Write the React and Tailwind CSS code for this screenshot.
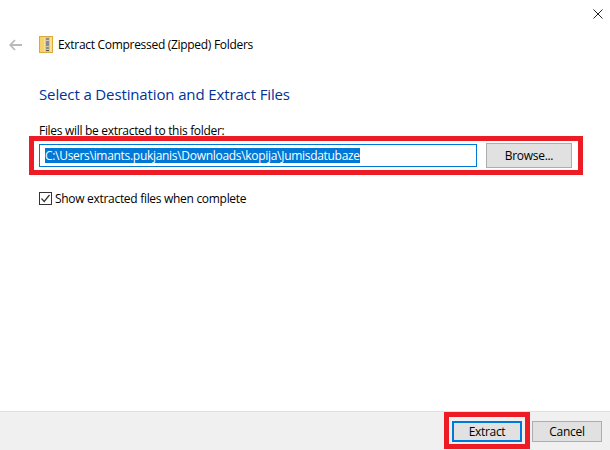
import React from "react";

const font = "font-['Open_Sans','Noto_Sans',sans-serif]";

function ZipFolder() {
  return (
    <svg width="14" height="17" viewBox="0 0 14 17">
      <rect x="0.5" y="0.5" width="13" height="16" fill="#fbe08f" stroke="#d9a93c" />
      <rect x="1" y="1" width="4" height="15" fill="#f7d26c" />
      <rect x="6" y="1" width="5" height="15" fill="#c9c9c4" />
      <path d="M7 3h3M7 6h3M7 9h3M7 12h3M7 14.5h3" stroke="#55554f" strokeWidth="1" />
      <rect x="7" y="6" width="3" height="3" fill="#8b8b85" />
    </svg>
  );
}

export default function App() {
  return (
    <div className={`w-[610px] h-[450px] bg-white flex flex-col overflow-hidden text-[12px] tracking-[-0.3px] text-black ${font}`}>
      <div className="flex justify-end pt-[9px] pr-[7px] h-[36px]">
        <svg width="10" height="10" viewBox="0 0 10 10">
          <path d="M0.5 0.5l9 9M9.5 0.5l-9 9" stroke="#222" strokeWidth="1" />
        </svg>
      </div>
      <div className="flex items-center h-[17px]">
        <svg className="ml-[9px]" width="13" height="12" viewBox="0 0 13 12" fill="none">
          <path d="M6 1L1.2 6L6 11M1.2 6H13" stroke="#b9b9b9" strokeWidth="1.8" />
        </svg>
        <div className="ml-[17px] flex">
          <ZipFolder />
        </div>
        <span className="ml-[5px]">Extract Compressed (Zipped) Folders</span>
      </div>
      <h1 className="ml-[39px] mt-[29px] h-[24px] leading-[24px] text-[15px] tracking-[-0.13px] font-normal text-[#003399]">
        Select a Destination and Extract Files
      </h1>
      <div className="ml-[39px] mt-[17px] h-[16px] leading-[16px]">Files will be extracted to this folder:</div>
      <div className="ml-[29px] mt-[-3px] w-[554px] h-[39px] border-[5px] border-[#ed1c24] pl-[5px] pr-[6px] flex items-center justify-between relative">
        <div className="w-[438px] h-[23px] border border-[#0078d7] flex items-center pl-[5px]">
          <span className="bg-[#0078d7] text-white leading-[15px] whitespace-nowrap">
            C:\Users\imants.pukjanis\Downloads\kopija\Jumisdatubaze
          </span>
        </div>
        <button className="w-[86px] h-[25px] bg-[#e1e1e1] border border-[#adadad]">Browse...</button>
      </div>
      <label className="ml-[39px] mt-[17px] flex items-center h-[13px]">
        <span className="w-[13px] h-[13px] border border-[#333] flex items-center justify-center">
          <svg width="11" height="11" viewBox="0 0 11 11" fill="none">
            <path d="M1.5 5.5L4.2 8.5L9.5 2" stroke="#333" strokeWidth="1.2" />
          </svg>
        </span>
        <span className="ml-[3px]">Show extracted files when complete</span>
      </label>
      <div className="mt-auto h-[39px] bg-[#f0f0f0] border-t border-[#dfdfdf] flex justify-end items-start gap-[2px] pr-[8px]">
        <div className="w-[86px] h-[37px] border-[5px] border-[#ed1c24] flex items-end justify-center pb-[2px]">
          <button className="w-[70px] h-[21px] bg-[#e1e1e1] border-2 border-[#0078d7]">Extract</button>
        </div>
        <button className="mt-[9px] w-[70px] h-[21px] bg-[#e1e1e1] border border-[#adadad]">Cancel</button>
      </div>
    </div>
  );
}
